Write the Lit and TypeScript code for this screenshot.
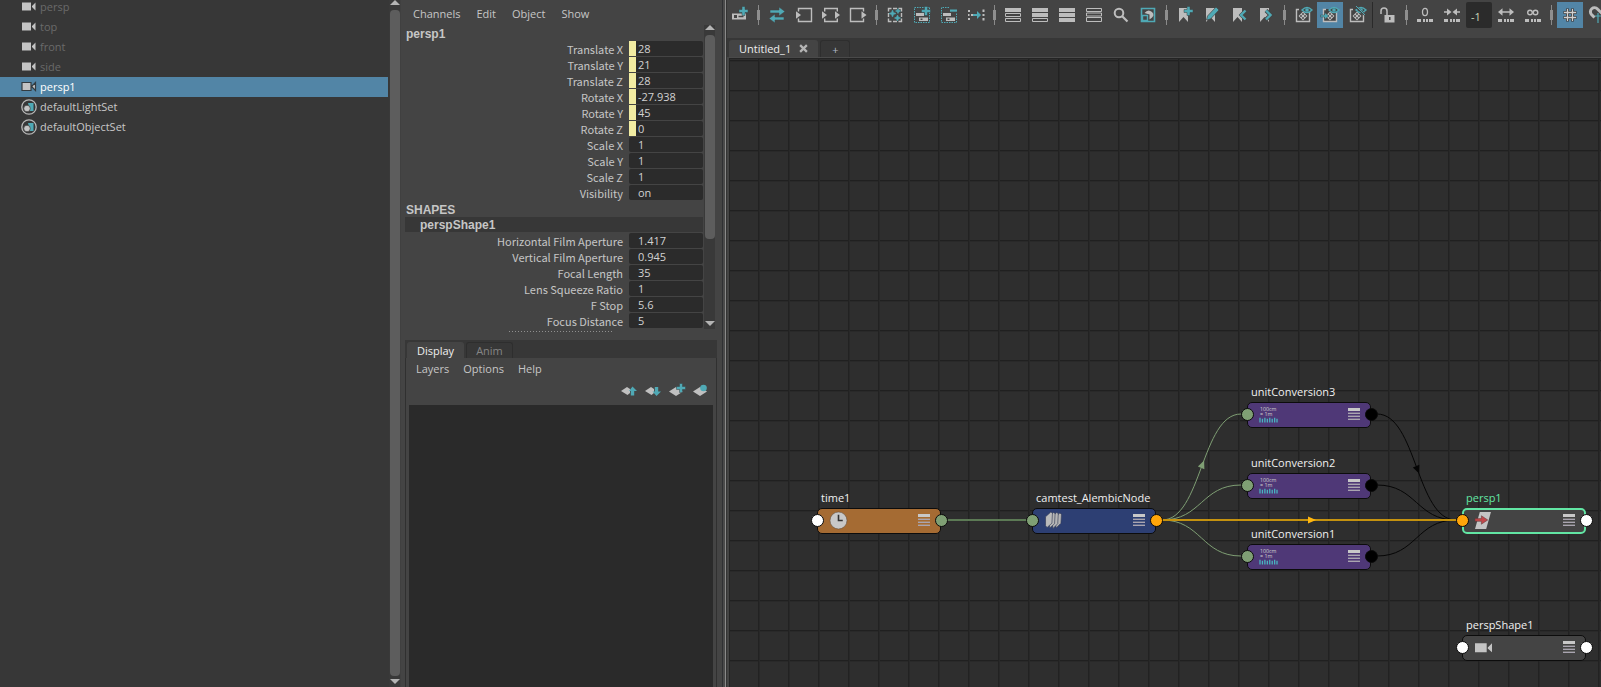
import { LitElement, html, svg, css } from "lit";
import { customElement, property } from "lit/decorators.js";
import { classMap } from "lit/directives/class-map.js";
import { styleMap } from "lit/directives/style-map.js";

const G = "#bdbdbd";
const T = "#4fa9b5";

const plus = (x: number, y: number) =>
  svg`<path d="M${x - 4.5} ${y - 1.5}h3v-3h3v3h3v3h-3v3h-3v-3h-3z" fill="${T}" stroke="#3a4042" stroke-width=".5"/>`;
const bars = (fills: boolean[]) =>
  fills.map((f, i) =>
    f
      ? svg`<rect x="0" y="${1 + i * 5}" width="16" height="4" fill="${G}"/>`
      : svg`<path d="M.5 ${1.5 + i * 5}h15v3H.5z" fill="none" stroke="${G}"/>`
  );
const bookmark = svg`<path d="M2 1h9v14l-4.500-5L2 15z" fill="${G}"/>`;
const dots = svg`<path d="M0 12h4v3H0zM6 12h2v3H6zM9 12h2v3H9zM12 12h4v3h-4z" fill="${G}"/>`;
const box = svg`<path d="M4 2.500H1.500v12h13v-12H12" fill="none" stroke="${G}" stroke-width="1.400"/>
  <path d="M8 4.500l4.500 4.500L8 13.500 3.500 9z" fill="${G}"/>
  <circle cx="8" cy="7" r=".9" fill="#444"/><circle cx="8" cy="11" r=".9" fill="#444"/><circle cx="6" cy="9" r=".9" fill="#444"/><circle cx="10" cy="9" r=".9" fill="#444"/>`;
const eye = svg`<path d="M7 3Q12 -2 17 3Q12 8 7 3z" fill="#444" stroke="${T}" stroke-width="1.400"/><circle cx="12" cy="3" r="1.800" fill="${T}"/>`;

const ICONS: Record<string, unknown> = {
  create: svg`<path d="M0 6.500h14v6H0z" fill="${G}"/><path d="M2 8h3v3H2zM6.500 8.700h5v1.600h-5z" fill="#444"/>${plus(11.5, 4)}`,
  swap: svg`<path d="M1 3h9V0l6 4.500-6 4.500V6H1zM15 10H6V7L0 11.500 6 16v-3h9z" fill="${T}" stroke="#444" stroke-width=".6"/>`,
  inputs: svg`<path d="M2.500 4.500V1.500h13v13h-13v-3" fill="none" stroke="${G}" stroke-width="1.400"/><path d="M0 4.300L5 8 0 11.700z" fill="${G}"/>`,
  both: svg`<path d="M1.700 4.500V1.500h12.600v3M1.700 11.500v3h12.600v-3" fill="none" stroke="${G}" stroke-width="1.400"/><path d="M-1 4.300L4 8-1 11.700zM12 4.300L17 8l-5 3.700z" fill="${G}"/>`,
  outputs: svg`<path d="M13.500 4.500V1.500H.500v13h13v-3" fill="none" stroke="${G}" stroke-width="1.400"/><path d="M11.500 4.300l5 3.700-5 3.700z" fill="${G}"/>`,
  arrange: svg`<path d="M4.500 1.500h-3v3M11.500 1.500h3v3M1.500 11.500v3h3M14.500 11.500v3h-3M1.500 6v4M14.500 6v4M6 1.500h4M6 14.500h4" fill="none" stroke="${G}" stroke-width="1.400"/>
    <path d="M5.500 3l1 2.500 2.500 1-2.500 1-1 2.500-1-2.500-2.500-1 2.500-1zM11 1.500l.8 1.700 1.700.8-1.700.8-.8 1.700-.8-1.700-1.700-.8 1.700-.8zM10.500 8l.9 2.100 2.100.9-2.100.9-.9 2.100-.9-2.100-2.100-.9 2.100-.9z" fill="${T}" stroke="${T}" stroke-width=".6"/>`,
  add: svg`<path d="M.5 .5h15v15H.5z" fill="none" stroke="${T}" stroke-dasharray="1.500 1"/><path d="M2 6h8v3H2zM5 10.500h9v3.500H5z" fill="${G}"/><path d="M6.500 11.500h2v1.500h-2z" fill="#444"/>${plus(12, 4)}`,
  remove: svg`<path d="M8 .5H.5v15h15V6" fill="none" stroke="${T}" stroke-dasharray="1.500 1"/><path d="M2 6h8v3H2zM5 10.500h9v3.500H5z" fill="${G}"/><path d="M6.500 11.500h2v1.500h-2z" fill="#444"/><path d="M9 2.500h7v2.200H9z" fill="${T}"/>`,
  connect: svg`<path d="M0 3h2v2H0zM3 7h2v2H3zM0 11h2v2H0zM0 7h1.500v2H0z" fill="${G}"/><path d="M5 7h4V4l4 4-4 4V9H5z" fill="${T}"/><path d="M14.500 2.500h2v2.500h-2zM14.500 7h2v2h-2zM14.500 11h2v2.500h-2z" fill="${G}"/>`,
  list1: bars([true, false, false]),
  list2: bars([true, true, false]),
  list3: bars([true, true, true]),
  list4: svg`<path d="M.5 1.500h15v3H.500zM.500 6h15v3H.500zM.500 10.500h15v4H.500z" fill="none" stroke="${G}"/>`,
  search: svg`<circle cx="6" cy="6" r="4.300" fill="none" stroke="${G}" stroke-width="2"/><path d="M9 9l5.500 5.500" stroke="${G}" stroke-width="2.200"/>`,
  frame: svg`<path d="M1.500 1.500h13v13h-13z" fill="none" stroke="${T}" stroke-width="1.600"/><path d="M4.500 6Q8 1.500 12 5t-2.500 7.500V7.500z" fill="${G}"/><path d="M2.500 8.500h5v5h-5z" fill="#444" stroke="${T}" stroke-width="1.400"/>`,
  bmAdd: svg`${bookmark}${plus(11.5, 4)}`,
  bmEdit: svg`${bookmark}<path d="M2.500 13l1-4L12 0l3 3L6.500 12z" fill="${T}" stroke="#444" stroke-width=".7"/>`,
  bmPrev: svg`${bookmark}<path d="M15 3.500L10.500 8l4.500 4.500" fill="none" stroke="#444" stroke-width="4"/><path d="M14.500 3.500L10 8l4.500 4.500" fill="none" stroke="${T}" stroke-width="2.400"/>`,
  bmNext: svg`${bookmark}<path d="M8 3.500L12.500 8 8 12.500" fill="none" stroke="#444" stroke-width="4"/><path d="M8 3.500L12.500 8 8 12.500" fill="none" stroke="${T}" stroke-width="2.400"/>`,
  showA: svg`${box}${eye}`,
  showB: svg`<path d="M1 2h14v13H1z" fill="#444"/>${box}<path d="M-1.500 8h4V5.500L7 9l-4.500 3.500V10h-4z" fill="${T}" stroke="#444" stroke-width=".5"/>${eye}`,
  showC: svg`${box}${eye}<path d="M6 -1l10 9" stroke="#444" stroke-width="2"/><path d="M7 -1l9 9" stroke="${T}" stroke-width="1"/>`,
  lock: svg`<path d="M4.500 8h10v7.500h-10z" fill="${G}"/><path d="M1 7V4a3 3 0 0 1 6 0v4" fill="none" stroke="${G}" stroke-width="1.500"/><path d="M9 10h1.500v3H9z" fill="#444"/>`,
  zero: svg`<ellipse cx="8" cy="5" rx="2.500" ry="3.600" fill="none" stroke="${G}" stroke-width="1.300"/>${dots}`,
  collapse: svg`<path d="M0 4.200h3V1.500L7.500 5 3 8.500V5.800H0zM16 4.200h-3V1.500L8.500 5 13 8.500V5.800h3z" fill="${G}"/>${dots}`,
  expand: svg`<path d="M7 4.200H4.500V1.200L0 5l4.500 3.800V5.800h7v3L16 5l-4.500-3.800v3z" fill="${G}"/>${dots}`,
  infinite: svg`<circle cx="5" cy="5.500" r="2.300" fill="none" stroke="${G}" stroke-width="1.400"/><circle cx="10.500" cy="5.500" r="2.300" fill="none" stroke="${G}" stroke-width="1.400"/>${dots}`,
  grid: svg`<path d="M5.500 1.500v13M10.500 1.500v13M1.500 5.500h13M1.500 10.500h13" stroke="#3c3c3c" stroke-width="3"/><path d="M5.500 2v12M10.500 2v12M2 5.500h12M2 10.500h12" stroke="#d0d0d0" stroke-width="1.300"/>`,
  magnet: svg`<path d="M5.500 10.500L2.500 7.500a4 4 0 0 1 6-5.500l5 5" fill="none" stroke="${G}" stroke-width="3"/><path d="M6 9h10M9 6v10M13 6v10" stroke="${T}" stroke-width="1.200"/>`,
  camera: svg`<path d="M1 3.500h9v8H1zM11 7l3.500-3.500v8L11 8z" fill="#c4c4c4"/>`,
  cameraOn: svg`<path d="M1 3.500h9v8H1zM11 7l3.500-3.500v8L11 8z" fill="#c4c4c4" stroke="#333b40" stroke-width="1.200"/>`,
  set: svg`<circle cx="8" cy="8" r="7.200" fill="none" stroke="#b8b8b8" stroke-width="1.300"/><path d="M7 4h5.500v8H9z" fill="${T}"/><circle cx="6" cy="9.500" r="3.300" fill="#c4c4c4" stroke="#383838" stroke-width=".7"/>`,
  layUp: svg`<path d="M0 8l6-4 3 2v4l-2.500 2z" fill="#c0c0c0"/><path d="M11.500 3.500L16 8h-2.800v4.500H9.800V8H8z" fill="${T}"/>`,
  layDown: svg`<path d="M0 8l6-4 3 2v4l-2.500 2z" fill="#c0c0c0"/><path d="M9.800 4h3.400v4.500H16L11.500 13 7.500 8.500h2.300z" fill="${T}"/>`,
  layAdd: svg`<path d="M0 8.500L7 4l7 4.500L7 13z" fill="#c0c0c0"/>${plus(12, 5)}`,
  layDot: svg`<path d="M0 8.500L7 4l7 4.500L7 13z" fill="#c0c0c0"/><circle cx="10.500" cy="5" r="3.300" fill="${T}"/>`,
  time: svg`<circle cx="8" cy="8" r="8" fill="#c8c8c8" stroke="#5a4a3a" stroke-width=".5"/><path d="M8 2.500V8h4" fill="none" stroke="#333" stroke-width="1.500"/>`,
  alembic: svg`<path d="M9 5l5-4 1.500 1-.5 8.500-4.500 4.500z" fill="#b5b5b5" stroke="#333a55" stroke-width=".6"/><path d="M6 5l5-4.500 1.500 1L12 11l-4.500 4.500z" fill="#b5b5b5" stroke="#333a55" stroke-width=".6"/><path d="M3 4.500L8 .5l1.500 1L9 11l-4.500 4z" fill="#b5b5b5" stroke="#333a55" stroke-width=".6"/><path d="M.5 4.500L5.500 0 7 1l-.500 9.500L2 14.500.500 13z" fill="#bbb" stroke="#333a55" stroke-width=".6"/>`,
  unit: svg`<text x="0" y="4.500" font-size="5" fill="#d0d0d0">100cm</text><text x="0" y="9.500" font-size="5" fill="#d0d0d0">= 1m</text><path d="M0 11v4.500M2.300 12v3.500M4.600 11v4.500M6.900 12v3.500M9.200 11v4.500M11.500 12v3.500M13.800 11v4.500M16 12v3.500" stroke="#49b5c2" stroke-width="1.200"/>`,
  transform: svg`<path d="M4.500 0H15l-4.500 16H0z" fill="#c4c4c4"/><path d="M0 6.200h6V3.500l6 4-6 4V8.800H0z" fill="#c0474a" stroke="#5c3a3a" stroke-width=".5"/>`,
  shapeCam: svg`<path d="M0 4h11v8.500H0zM12 8l4-4v8.500l-4-3.500z" fill="#c4c4c4"/>`,
};

@customElement("ui-icon")
class UiIcon extends LitElement {
  @property() name = "";
  static styles = css`
    :host { display: block; width: 16px; height: 16px; flex: none; }
    svg { display: block; width: 100%; height: 100%; overflow: visible; }
    text { font-family: "Open Sans", sans-serif; }
  `;
  render() {
    return html`<svg viewBox="0 0 16 16" aria-hidden="true">${ICONS[this.name]}</svg>`;
  }
}

@customElement("scroll-rail")
class ScrollRail extends LitElement {
  static styles = css`
    :host { display: flex; flex-direction: column; align-items: center; width: 11px; background: #393939; }
    .up, .down { border: 5px solid transparent; flex: none; }
    .up { border-top: 0; border-bottom-color: #b4b4b4; }
    .down { border-bottom: 0; border-top-color: #b4b4b4; margin: 3px 0; }
    .track { flex: 1; width: 10px; margin-top: 5px; display: flex; flex-direction: column; }
    .thumb { background: #5d5d5d; border-radius: 4px; flex: var(--filled, 1) 1 0; }
    .rest { flex: calc(1 - var(--filled, 1)) 1 0; }
  `;
  render() {
    return html`<span class="up"></span>
      <span class="track"><span class="thumb"></span><span class="rest"></span></span>
      <span class="down"></span>`;
  }
}

const OUTLINER = [
  { label: "persp", icon: "camera", dim: true },
  { label: "top", icon: "camera", dim: true },
  { label: "front", icon: "camera", dim: true },
  { label: "side", icon: "camera", dim: true },
  { label: "persp1", icon: "cameraOn", selected: true },
  { label: "defaultLightSet", icon: "set" },
  { label: "defaultObjectSet", icon: "set" },
];

@customElement("outliner-panel")
class OutlinerPanel extends LitElement {
  static styles = css`
    :host { display: flex; background: #373737; overflow: hidden; border-right: 1px solid #404040; }
    .list { flex: 1; margin: -3px 1px 0 0; padding: 0; list-style: none; }
    .row { display: flex; align-items: center; gap: 3px; height: 20px; padding: 0 0 1px 21px; box-sizing: border-box; color: #c8c8c8; }
    .dim { color: #6a6a6a; }
    .selected { background: #5285a6; color: #fff; }
  `;
  render() {
    return html`<ul class="list">
        ${OUTLINER.map(
          (o) => html`<li class=${classMap({ row: true, dim: !!o.dim, selected: !!o.selected })}>
            <ui-icon name=${o.icon}></ui-icon>${o.label}
          </li>`
        )}
      </ul>
      <scroll-rail></scroll-rail>`;
  }
}

type Channel = [name: string, value: string, keyed?: boolean];
const TRANSFORM: Channel[] = [
  ["Translate X", "28", true],
  ["Translate Y", "21", true],
  ["Translate Z", "28", true],
  ["Rotate X", "-27.938", true],
  ["Rotate Y", "45", true],
  ["Rotate Z", "0", true],
  ["Scale X", "1"],
  ["Scale Y", "1"],
  ["Scale Z", "1"],
  ["Visibility", "on"],
];
const SHAPE: Channel[] = [
  ["Horizontal Film Aperture", "1.417"],
  ["Vertical Film Aperture", "0.945"],
  ["Focal Length", "35"],
  ["Lens Squeeze Ratio", "1"],
  ["F Stop", "5.6"],
  ["Focus Distance", "5"],
];

@customElement("channel-box")
class ChannelBox extends LitElement {
  static styles = css`
    :host { display: flex; flex-direction: column; background: #444; color: #c6c6c6; padding: 0 5px 0 4px; }
    button { font: inherit; color: inherit; background: none; border: 0; padding: 0; }
    .menu { display: flex; gap: 16px; line-height: 16px; padding: 6px 8px 3px; }
    .scroller { display: flex; gap: 1px; padding-right: 2px; }
    .channels { flex: 1; padding-left: 1px; }
    .name { font-family: "Liberation Sans", Arial, sans-serif; font-size: 12px; font-weight: bold; line-height: 18px; height: 16px; }
    .shape { background: #373737; padding-left: 15px; margin-left: -1px; height: 15px; margin-bottom: 1px; line-height: 16px; }
    .row { display: flex; align-items: center; justify-content: flex-end; gap: 6px; height: 16px; }
    .row label { white-space: nowrap; line-height: 16px; font-family: "Noto Sans CJK JP", sans-serif; }
    .value {
      box-sizing: border-box; width: 74px; height: 15px; margin: 0 0 1px; padding: 0 0 0 9px;
      border: 0; border-radius: 2px; background: #2b2b2b; color: #d2d2d2;
      font: 11px "Open Sans", "Noto Sans", sans-serif;
    }
    .keyed { border-left: 7px solid #f1eca2; border-radius: 0 2px 2px 0; padding-left: 2px; }
    .rail { --filled: 0.72; }
    .grip { width: 104px; height: 1px; margin: 2px auto 8px; background: repeating-linear-gradient(90deg, #8f8f8f 0 1px, transparent 1px 3px); }
    .tabs { display: flex; align-items: flex-end; gap: 2px; background: #373737; height: 18px; padding: 0 2px; }
    .tab { height: 16px; padding: 0 9px; border: 1px solid #2e2e2e; border-bottom: 0; border-radius: 3px 3px 0 0; color: #858585; }
    .current { background: #444; border-color: #444; color: #eee; }
    .layers { flex: 1; display: flex; flex-direction: column; border: solid #303030; border-width: 0 1px; padding: 0 3px; }
    .layers .menu { padding: 3px 7px; gap: 14px; }
    .tools { display: flex; justify-content: flex-end; gap: 8px; padding: 2px 4px 6px 0; height: 17px; }
    .surface { flex: 1; background: #2a2a2a; }
  `;
  private rows(list: Channel[]) {
    return list.map(([name, value, keyed]) => {
      const id = name.replace(/ /g, "-");
      return html`<div class="row">
        <label for=${id}>${name}</label>
        <input id=${id} class=${classMap({ value: true, keyed: !!keyed })} .value=${value} />
      </div>`;
    });
  }
  render() {
    return html`
      <nav class="menu">
        ${["Channels", "Edit", "Object", "Show"].map((m) => html`<button>${m}</button>`)}
      </nav>
      <div class="scroller">
        <div class="channels">
          <div class="name">persp1</div>
          ${this.rows(TRANSFORM)}
          <div class="name">SHAPES</div>
          <div class="name shape">perspShape1</div>
          ${this.rows(SHAPE)}
        </div>
        <scroll-rail class="rail"></scroll-rail>
      </div>
      <div class="grip"></div>
      <div class="tabs" role="tablist">
        <button class="tab current" role="tab" aria-selected="true">Display</button>
        <button class="tab" role="tab" aria-selected="false">Anim</button>
      </div>
      <section class="layers">
        <nav class="menu">${["Layers", "Options", "Help"].map((m) => html`<button>${m}</button>`)}</nav>
        <div class="tools">
          ${["layUp", "layDown", "layAdd", "layDot"].map(
            (i) => html`<button aria-label=${i}><ui-icon name=${i}></ui-icon></button>`
          )}
        </div>
        <div class="surface"></div>
      </section>`;
  }
}

interface GraphNode {
  id: string; x: number; y: number; icon: string;
  fill: string; input: string; output: string; selected?: boolean;
}
const GREEN = "#7f9f74";
const AMBER = "#ffa50a";
const NODES: GraphNode[] = [
  { id: "time1", x: 87, y: 449, icon: "time", fill: "#a56b33", input: "#fff", output: GREEN },
  { id: "camtest_AlembicNode", x: 302, y: 449, icon: "alembic", fill: "#2d3f73", input: GREEN, output: AMBER },
  { id: "unitConversion3", x: 517, y: 343, icon: "unit", fill: "#4f3877", input: GREEN, output: "#000" },
  { id: "unitConversion2", x: 517, y: 414, icon: "unit", fill: "#4f3877", input: GREEN, output: "#000" },
  { id: "unitConversion1", x: 517, y: 485, icon: "unit", fill: "#4f3877", input: GREEN, output: "#000" },
  { id: "persp1", x: 732, y: 449, icon: "transform", fill: "#444", input: AMBER, output: "#fff", selected: true },
  { id: "perspShape1", x: 732, y: 576, icon: "shapeCam", fill: "#444", input: "#fff", output: "#fff" },
];
const NODE_WIDTH = 124;
const LINKS = [
  { from: 0, to: 1, color: "#5c7a55", width: 2 },
  { from: 1, to: 2, color: GREEN, width: 1, arrow: true },
  { from: 1, to: 3, color: GREEN, width: 1 },
  { from: 1, to: 4, color: GREEN, width: 1 },
  { from: 2, to: 5, color: "#050505", width: 1, arrow: true },
  { from: 3, to: 5, color: "#050505", width: 1 },
  { from: 4, to: 5, color: "#050505", width: 1 },
  { from: 1, to: 5, color: "#c4920f", width: 2, arrow: true },
];

@customElement("node-graph")
class NodeGraph extends LitElement {
  static styles = css`
    :host {
      display: block; position: relative; overflow: hidden; background-color: #2e2e2e;
      background-image:
        linear-gradient(90deg, #222 1px, #282828 1px, #282828 2px, transparent 2px),
        linear-gradient(#202020 1px, #292929 1px, #292929 2px, transparent 2px);
      background-size: 30px 30px; background-position: 28px 1px;
    }
    .links { position: absolute; inset: 0; width: 100%; height: 100%; }
    .node { position: absolute; }
    .title { position: absolute; left: 4px; bottom: 100%; line-height: 20px; white-space: nowrap; color: #f0f0f0; }
    .body {
      box-sizing: border-box; height: 26px; display: flex; align-items: center; justify-content: space-between;
      padding: 0 10px 2px 12px; border: 1px solid #0c0c0c; border-radius: 5px;
    }
    .selected .body { border: 2px solid #62e6a4; padding: 0 9px 2px 11px; }
    .selected .title { color: #62e6a4; }
    .kind { width: 17px; height: 17px; }
    .rows { width: 12px; height: 12px; display: grid; gap: 1px; grid-template-rows: 3px 2px 2px 2px; color: #a9a4b0; }
    .rows i { border-bottom: 1px solid currentColor; background: rgba(180, 180, 180, 0.35); box-sizing: border-box; }
    .rows i:first-child { background: #c8c8c8; border-color: #c8c8c8; }
    .port { position: absolute; box-sizing: border-box; width: 13px; height: 13px; top: 6px; border: 1px solid #0a0a0a; border-radius: 50%; }
    .in { left: -6px; }
    .out { right: -7px; }
  `;
  private link(l: (typeof LINKS)[number]) {
    const a = NODES[l.from];
    const b = NODES[l.to];
    const x1 = a.x + NODE_WIDTH + 6;
    const y1 = a.y + 12;
    const x2 = b.x - 6;
    const y2 = b.y + 12;
    const mx = (x1 + x2) / 2;
    const my = (y1 + y2) / 2;
    const angle = y1 === y2 ? 0 : y2 < y1 ? -68 : 68;
    return svg`<path d="M${x1} ${y1}C${mx} ${y1} ${mx} ${y2} ${x2} ${y2}" fill="none" stroke=${l.color} stroke-width=${l.width}/>
      ${l.arrow ? svg`<path d="M-1 -3.500L7 0L-1 3.500z" fill=${y1 === y2 ? "#ffb60f" : l.color} transform="translate(${mx} ${my}) rotate(${angle})"/>` : ""}`;
  }
  render() {
    return html`<svg class="links" aria-hidden="true">${LINKS.map((l) => this.link(l))}</svg>
      ${NODES.map(
        (n) => html`<div
          class=${classMap({ node: true, selected: !!n.selected })}
          style=${styleMap({ left: `${n.x}px`, top: `${n.y}px`, width: `${NODE_WIDTH}px` })}
        >
          <span class="title">${n.id}</span>
          <div class="body" style=${styleMap({ background: n.fill })}>
            <ui-icon class="kind" name=${n.icon}></ui-icon>
            <span class="rows"><i></i><i></i><i></i><i></i></span>
          </div>
          <span class="port in" style=${styleMap({ background: n.input })}></span>
          <span class="port out" style=${styleMap({ background: n.output })}></span>
        </div>`
      )}`;
  }
}

const TOOLBAR: string[] = [
  "create", "|", "swap", "inputs", "both", "outputs", "|", "arrange", "add", "remove", "connect", "|",
  "list1", "list2", "list3", "list4", "search", "frame", "|", "bmAdd", "bmEdit", "bmPrev", "bmNext", "|",
  "showA", "showB", "showC", "/", "lock", "|", "zero", "collapse", "#", "expand", "infinite", "|", "grid", "magnet",
];
const ACTIVE = ["showB", "grid"];

@customElement("node-editor")
class NodeEditor extends LitElement {
  static styles = css`
    :host { display: flex; flex-direction: column; background: #444; min-width: 0; overflow: hidden; }
    button { font: inherit; color: inherit; background: none; border: 0; padding: 0; }
    .toolbar { display: flex; align-items: center; gap: 1px; height: 30px; padding-bottom: 8px; }
    .tool { flex: none; width: 26px; height: 26px; display: grid; place-items: center; }
    .active { background: #5285a6; }
    .sep { flex: none; width: 9px; height: 20px; display: grid; place-items: center; background: linear-gradient(#8a8a8a, #8a8a8a) center / 1px 100% no-repeat; }
    .sep::before { content: ""; width: 3px; height: 10px; background: #8f8f8f; }
    .rule { flex: none; width: 1px; height: 26px; margin: 0 1px; background: #2a2a2a; }
    .depth {
      flex: none; box-sizing: border-box; width: 26px; height: 26px; border: 0; border-radius: 2px; padding: 2px 0 0 5px;
      background: #2b2b2b; color: #c8d8b8; font: 11px "Open Sans", "Noto Sans", sans-serif;
    }
    .tabs { display: flex; align-items: flex-end; gap: 2px; height: 19px; padding-left: 2px; background: #373737; }
    .tab { display: flex; align-items: center; gap: 8px; height: 17px; padding: 0 10px; border-radius: 3px 3px 0 0; box-sizing: border-box; }
    .current { background: #444; color: #eee; }
    .extra { padding: 0 11px; border: 1px solid #2e2e2e; border-bottom: 0; color: #b0b8c8; }
    .cross { width: 9px; height: 9px; display: block; }
    .frame { flex: 1; display: flex; border-top: 1px solid #4a4a4a; margin-left: 2px; }
    node-graph { flex: 1; border: solid #242424; border-width: 1px 0 0 1px; }
  `;
  private tool(name: string) {
    if (name === "|") return html`<span class="sep"></span>`;
    if (name === "/") return html`<span class="rule"></span>`;
    if (name === "#") return html`<input class="depth" aria-label="Depth" .value=${"-1"} />`;
    return html`<button class=${classMap({ tool: true, active: ACTIVE.includes(name) })} aria-label=${name}>
      <ui-icon name=${name}></ui-icon>
    </button>`;
  }
  render() {
    return html`<div class="toolbar" role="toolbar">${TOOLBAR.map((t) => this.tool(t))}</div>
      <div class="tabs" role="tablist">
        <button class="tab current" role="tab" aria-selected="true">
          Untitled_1
          <svg class="cross" viewBox="0 0 8 8" aria-hidden="true"><path d="M1 1l6 6M7 1L1 7" stroke="#b4b4b4" stroke-width="2" /></svg>
        </button>
        <button class="tab extra" aria-label="New tab">+</button>
      </div>
      <div class="frame"><node-graph></node-graph></div>`;
  }
}

@customElement("app-root")
class AppRoot extends LitElement {
  static styles = css`
    :host {
      display: grid; grid-template-columns: 401px 321px 5px minmax(0, 1fr); height: 100vh; overflow: hidden;
      font: 11px "Open Sans", "Noto Sans", sans-serif; background: #444;
    }
    .splitter { background: linear-gradient(90deg, #2f3033 1px, #4a4a4a 1px, #4a4a4a 3px, #8a8a8a 3px, #8a8a8a 4px, #333 4px); }
  `;
  render() {
    return html`<outliner-panel></outliner-panel>
      <channel-box></channel-box>
      <div class="splitter"></div>
      <node-editor></node-editor>`;
  }
}
